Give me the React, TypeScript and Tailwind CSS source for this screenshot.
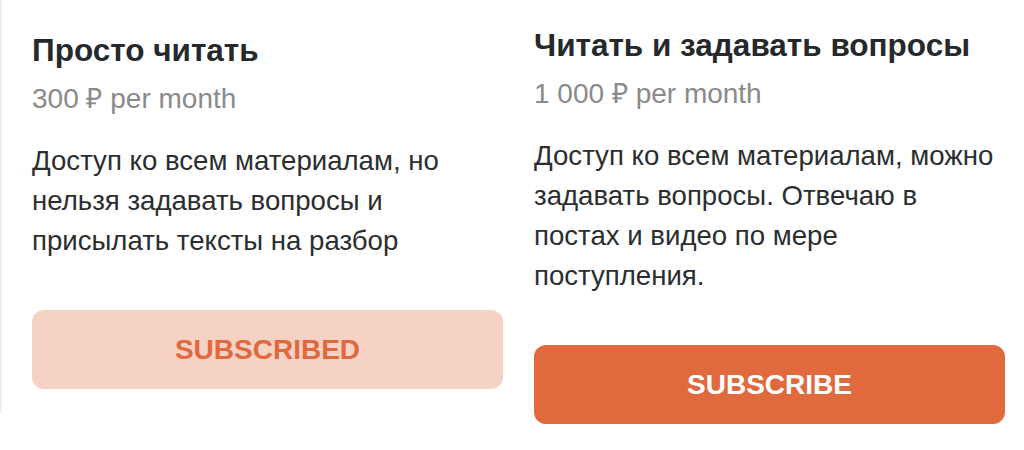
type Plan = {
  title: string;
  price: string;
  description: string;
  subscribed: boolean;
};

const plans: Plan[] = [
  {
    title: "Просто читать",
    price: "300 ₽ per month",
    description:
      "Доступ ко всем материалам, но нельзя задавать вопросы и присылать тексты на разбор",
    subscribed: true,
  },
  {
    title: "Читать и задавать вопросы",
    price: "1 000 ₽ per month",
    description:
      "Доступ ко всем материалам, можно задавать вопросы. Отвечаю в постах и видео по мере поступления.",
    subscribed: false,
  },
];

function PlanCard({ plan }: { plan: Plan }) {
  return (
    <div className="flex w-[471px] flex-col">
      <h2 className="text-[31.5px] leading-[36px] font-bold text-[#25292b]">{plan.title}</h2>
      <p className="mt-[13px] text-[28px] leading-[36px] text-[#8a8a8a]">{plan.price}</p>
      <p className="mt-6 text-[27.6px] leading-[40px] text-[#2b2e30]">{plan.description}</p>

      {plan.subscribed ? (
        <button className="mt-[49px] h-[79px] w-full rounded-xl bg-[#f6d2c5] text-[28px] font-bold text-[#e0693e]">
          SUBSCRIBED
        </button>
      ) : (
        <button className="mt-[49px] h-[79px] w-full rounded-xl bg-[#e0693e] text-[28px] font-bold text-white">
          SUBSCRIBE
        </button>
      )}
    </div>
  );
}

export default function App() {
  return (
    <div
      className="flex h-[450px] w-[1024px] items-start overflow-hidden bg-white"
      style={{ fontFamily: '"Liberation Sans", Arial, sans-serif' }}
    >
      {/* current plan column, with the faint rail on its left edge */}
      <div className="w-[502px] shrink-0 border-l-2 border-[#eeeeee] pl-[30px] pt-[32px] pb-6">
        <PlanCard plan={plans[0]} />
      </div>
      <div className="w-[522px] shrink-0 pl-[32px] pt-[27px]">
        <PlanCard plan={plans[1]} />
      </div>
    </div>
  );
}
